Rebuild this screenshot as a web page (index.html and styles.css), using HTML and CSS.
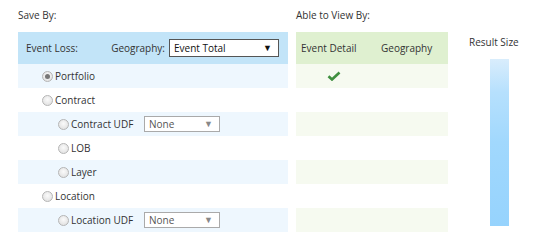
FILE: index.html
```html
<!DOCTYPE html>
<html lang="en">
<head>
    <meta charset="UTF-8">
    <title>Save By</title>
    <link rel="stylesheet" href="styles.css">
</head>
<body>
    <div class="page">
        <div class="save-col">
            <div class="caption">Save By:</div>
            <div class="save-table">
                <div class="save-head">
                    <span class="head-title">Event Loss:</span>
                    <span class="geo-label">Geography:</span>
                    <div class="select big">Event Total<span class="arrow">&#9660;</span></div>
                </div>
                <div class="row alt lvl1"><span class="radio checked"></span>Portfolio</div>
                <div class="row lvl1"><span class="radio"></span>Contract</div>
                <div class="row alt lvl2"><span class="radio"></span><span class="udf">Contract UDF</span><div class="select small">None<span class="arrow">&#9660;</span></div></div>
                <div class="row lvl2"><span class="radio"></span>LOB</div>
                <div class="row alt lvl2"><span class="radio"></span>Layer</div>
                <div class="row lvl1"><span class="radio"></span>Location</div>
                <div class="row alt lvl2"><span class="radio"></span><span class="udf">Location UDF</span><div class="select small">None<span class="arrow">&#9660;</span></div></div>
            </div>
        </div>
        <div class="view-col">
            <div class="caption">Able to View By:</div>
            <div class="view-table">
                <div class="view-head">
                    <span class="vh1">Event Detail</span>
                    <span class="vh2">Geography</span>
                </div>
                <div class="vrow alt">
                    <span class="check">
                        <svg width="14" height="10" viewBox="0 0 14 10"><path d="M1.5 5.2 L5 8.5 L12.5 1.5" fill="none" stroke="#3f8f3f" stroke-width="2.6"/></svg>
                    </span>
                </div>
                <div class="vrow"></div>
                <div class="vrow alt"></div>
                <div class="vrow"></div>
                <div class="vrow alt"></div>
                <div class="vrow"></div>
                <div class="vrow alt"></div>
            </div>
        </div>
        <div class="result-col">
            <div class="result-title">Result Size</div>
            <div class="result-bar"></div>
        </div>
    </div>
</body>
</html>
```
FILE: styles.css
```css
body {
    margin: 0;
    font-family: 'Open Sans', 'Noto Sans', sans-serif;
    font-size: 10px;
    color: #333;
    background: #fff;
}

.page {
    display: flex;
    padding: 8px 0 0 18px;
}

.caption {
    height: 24px;
    line-height: 15px;
}

.save-col {
    width: 270px;
}

.save-head {
    display: flex;
    align-items: center;
    height: 32px;
    background: #c2e4f8;
    padding: 0 9px 0 8px;
}

.head-title {
    flex: 1;
}

.geo-label {
    margin-right: 4px;
}

.select {
    position: relative;
    box-sizing: border-box;
    background: #fff;
    line-height: 14px;
}

.select.big {
    width: 110px;
    height: 18px;
    border: 1px solid #555;
    padding: 1px 4px;
    color: #111;
}

.select.small {
    width: 76px;
    height: 16px;
    border: 1px solid #aaa;
    padding: 0 4px;
    color: #555;
}

.arrow {
    position: absolute;
    right: 6px;
    top: 1px;
    font-size: 9px;
    color: #111;
}

.select.small .arrow {
    color: #888;
    top: 0;
}

.row {
    display: flex;
    align-items: center;
    height: 24px;
}

.row.alt {
    background: #eef7fe;
}

.lvl1 {
    padding-left: 24px;
}

.lvl2 {
    padding-left: 40px;
}

.udf {
    width: 73px;
}

.radio {
    width: 9px;
    height: 9px;
    border: 1px solid #b5b5b5;
    border-radius: 50%;
    background: radial-gradient(circle at 50% 40%, #fafafa, #dcdcdc);
    margin-right: 2px;
    position: relative;
}

.radio.checked::after {
    content: "";
    position: absolute;
    left: 2px;
    top: 2px;
    width: 5px;
    height: 5px;
    border-radius: 50%;
    background: #777;
}

.view-col {
    width: 152px;
    margin-left: 8px;
}

.view-head {
    display: flex;
    align-items: center;
    height: 32px;
    background: #dff0d0;
}

.vh1 {
    padding-left: 5px;
    width: 80px;
}

.vrow {
    height: 24px;
}

.vrow.alt {
    background: #f6faf0;
}

.check {
    display: flex;
    justify-content: center;
    align-items: center;
    width: 76px;
    height: 24px;
}

.result-col {
    margin-left: 21px;
    padding-top: 26px;
}

.result-title {
    line-height: 16px;
}

.result-bar {
    width: 19px;
    height: 167px;
    margin: 9px 0 0 21px;
    background: linear-gradient(#d9edfc, #b6e0fd 20%, #a1d8fd 50%, #96d3fd);
}
```
